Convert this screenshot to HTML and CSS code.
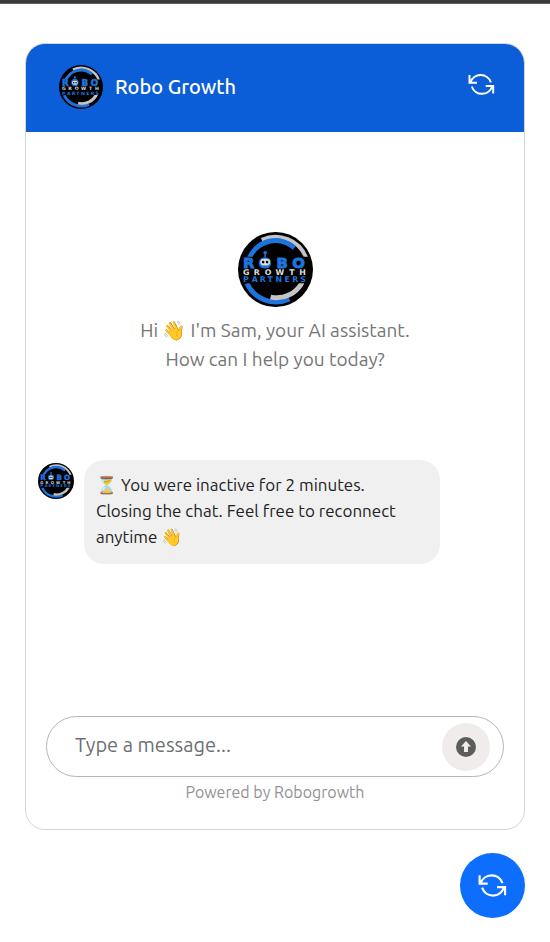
FILE: index.html
```html
<!DOCTYPE html>
<html lang="en">
<head>
<meta charset="utf-8">
<meta name="viewport" content="width=device-width, initial-scale=1">
<title>Robo Growth</title>
<link rel="stylesheet" href="styles.css">
</head>
<body>
<div class="topbar"></div>
<main class="widget">
  <section class="card">
    <header class="header">
      <svg class="logo-header" viewBox="0 0 76 76" role="img" aria-label="Robo Growth Partners">
        <g id="logo">
          <circle cx="38" cy="38" r="38" fill="#000"/>
          <g fill="none" stroke-width="5">
            <path d="M24 8A33 33 0 0 1 69 26" stroke="#c4c4c4" stroke-width="4"/>
            <path d="M11 28A28.500 28.500 0 0 1 57 16" stroke="#1d74de"/>
            <path d="M9 52A32.500 32.500 0 0 0 52 68" stroke="#1d74de"/>
            <path d="M65 51A29 29 0 0 1 33 66" stroke="#c4c4c4"/>
          </g>
          <path d="M4 25H73V52H4Z" fill="#000"/>
          <g class="logo-type">
            <text class="logo-robo" x="5 21 39 55" y="36">ROBO</text>
            <text class="logo-growth" x="5 16 27 38 52 62" y="44">GROWTH</text>
            <text class="logo-partners" x="5 14 22 30 38 47 55 63" y="51">PARTNERS</text>
          </g>
          <circle cx="27.500" cy="21" r="1.800" fill="#1d74de"/>
          <path d="M27.500 22v4" stroke="#1d74de" stroke-width="1.500"/>
          <rect x="22.500" y="27" width="10" height="7" rx="3.500" fill="#ddd"/>
          <circle cx="25.500" cy="30.500" r="1.300"/><circle cx="29.500" cy="30.500" r="1.300"/>
        </g>
      </svg>
      <h1 class="title">Robo Growth</h1>
      <button class="reset" type="button" aria-label="Restart chat">
        <svg class="icon-refresh" viewBox="0 0 27 23">
          <path id="refresh" d="M1.500 2V9.700H9M2.500 9.500A10.700 10.700 0 0 1 22.800 9.300M25.200 20.500V13H17.700M24.200 13.300A10.700 10.700 0 0 1 3.800 13.500" fill="none" stroke="currentColor" stroke-width="2"/>
        </svg>
      </button>
    </header>
    <div class="messages">
      <div class="welcome">
        <svg class="logo-welcome" viewBox="0 0 76 76" role="img" aria-label="Robo Growth Partners"><use href="#logo"/></svg>
        <p>Hi 👋 I'm Sam, your AI assistant.<br>How can I help you today?</p>
      </div>
      <div class="message">
        <svg class="logo-message" viewBox="0 0 76 76" role="img" aria-label="Sam"><use href="#logo"/></svg>
        <p class="bubble">⏳ You were inactive for 2 minutes. Closing the chat. Feel free to reconnect anytime 👋</p>
      </div>
    </div>
    <form class="composer">
      <input class="field" type="text" placeholder="Type a message..." aria-label="Type a message">
      <button class="send" type="button" aria-label="Send">
        <svg class="icon-send" viewBox="0 0 20 20"><circle cx="10" cy="10" r="10" fill="#5c5c5c"/><path d="M10 4L15 9.500H12V15H8V9.500H5Z" fill="#f0ecec"/></svg>
      </button>
    </form>
    <p class="powered">Powered by Robogrowth</p>
  </section>
  <button class="fab" type="button" aria-label="Reload assistant"><svg class="icon-refresh icon-large" viewBox="0 0 27 23"><use href="#refresh"/></svg></button>
</main>
</body>
</html>
```
FILE: styles.css
```css
* { box-sizing: border-box; }
body { margin: 0; background: #fff; font-family: Ubuntu, "Noto Sans", "Noto Color Emoji", sans-serif; }
h1, p { margin: 0; }
button { border: 0; padding: 0; cursor: pointer; }
svg { display: block; flex: none; }
.logo-type { font-family: "DejaVu Sans", sans-serif; font-weight: bold; }
.logo-robo { font-size: 15px; fill: #1d74de; stroke: #1d74de; stroke-width: 1px; }
.logo-growth { font-size: 8px; fill: #ddd; }
.logo-partners { font-size: 8px; fill: #1d74de; }
.topbar { height: 4px; background: #39383d; border-bottom: 1px solid #606060; }
.widget { display: flex; flex-direction: column; padding: 39px 25px 24px; }
.card { border: 1px solid #d5d5d5; border-radius: 20px; overflow: hidden; }
.header { display: flex; align-items: center; gap: 12px; height: 88px; padding: 0 29px 2px 33px; background: #0b5ed7; color: #fff; }
.logo-header { width: 44px; height: 44px; }
.title { flex: 1; font-size: 20px; font-weight: 500; line-height: 28px; }
.reset { padding-bottom: 6px; background: none; color: #fff; }
.icon-refresh { width: 27px; height: 23px; }
.messages { padding: 100px 12px 152px; }
.welcome { display: flex; flex-direction: column; align-items: center; gap: 9px; color: #757575; font-size: 19px; line-height: 29px; text-align: center; }
.logo-welcome { width: 75px; height: 75px; }
.message { display: flex; gap: 10px; margin-top: 86px; }
.logo-message { width: 36px; height: 36px; margin-top: 3px; }
.bubble { max-width: 75%; padding: 12px 24px 14px 12px; border-radius: 20px; background: #f0f0f0; color: #222; font-size: 17px; line-height: 26px; }
.composer { display: flex; align-items: center; margin: 0 20px; padding: 6px 13px 5px 28px; border: 1px solid #b5b5b5; border-radius: 31px; }
.field { flex: 1; min-width: 0; padding: 0 0 4px; border: 0; outline: 0; background: none; font: 20px/28px Ubuntu, "Noto Sans", sans-serif; }
.field::placeholder { color: #6c6f73; }
.send { display: flex; align-items: center; justify-content: center; width: 48px; height: 48px; border-radius: 50%; background: #f0ecec; }
.icon-send { width: 20px; height: 20px; }
.powered { padding: 3px 0 25px; color: #929292; font-size: 16px; line-height: 24px; text-align: center; }
.fab { display: flex; align-items: center; justify-content: center; align-self: flex-end; width: 65px; height: 65px; margin-top: 23px; border-radius: 50%; background: #0d6efd; color: #fff; }
.icon-large { width: 29px; height: 25px; }
```
